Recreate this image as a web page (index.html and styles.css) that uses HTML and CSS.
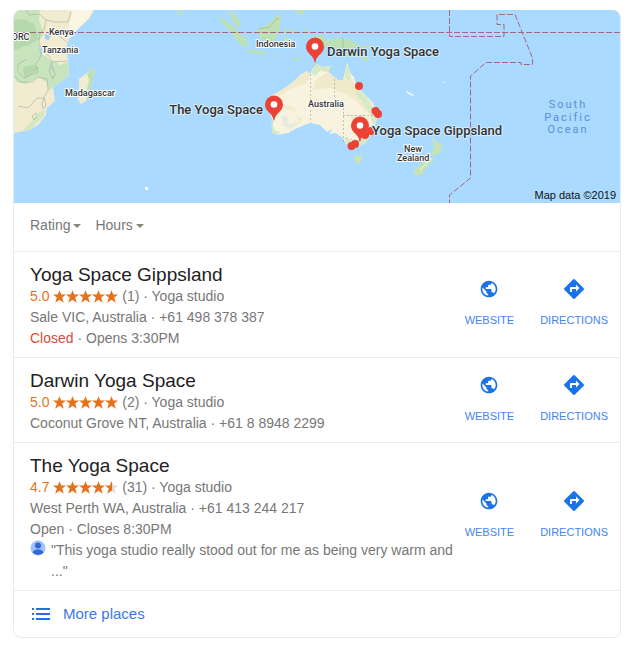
FILE: index.html
```html
<!DOCTYPE html>
<html lang="en">
<head>
  <meta charset="UTF-8">
  <meta name="viewport" content="width=device-width, initial-scale=1.0">
  <title>Yoga Space - Places</title>
  <link rel="stylesheet" href="styles.css">
</head>
<body>
  <!-- shared icons -->
  <svg class="sprite" aria-hidden="true">
    <symbol id="globe" viewBox="0 0 24 24">
      <path d="M12 2C6.48 2 2 6.48 2 12s4.48 10 10 10 10-4.48 10-10S17.52 2 12 2zm-1 17.93c-3.95-.49-7-3.85-7-7.93 0-.62.08-1.21.21-1.79L9 15v1c0 1.1.9 2 2 2v1.93zm6.9-2.54c-.26-.81-1-1.39-1.9-1.39h-1v-3c0-.55-.45-1-1-1H8v-2h2c.55 0 1-.45 1-1V7h2c1.1 0 2-.9 2-2v-.41c2.93 1.19 5 4.06 5 7.41 0 2.08-.8 3.97-2.1 5.39z"/>
    </symbol>
    <symbol id="directions" viewBox="0 0 24 24">
      <path d="M21.71 11.29l-9-9a1 1 0 0 0-1.41 0l-9 9a1 1 0 0 0 0 1.41l9 9c.39.39 1.02.39 1.41 0l9-9a1 1 0 0 0 0-1.41zM14 14.5V12h-4v3H8v-4c0-.55.45-1 1-1h5V7.5l3.5 3.5-3.5 3.5z"/>
    </symbol>
    <symbol id="star" viewBox="0 0 24 24">
      <path d="M12 .5l3.2 8H24l-7 5.5 2.8 9.5L12 18l-7.800 5.500L7 14 0 8.500h8.800z"/>
    </symbol>
    <symbol id="half-star" viewBox="0 0 24 24">
      <path fill="#dadce0" d="M12 .5l3.2 8H24l-7 5.5 2.8 9.5L12 18z"/>
      <path d="M13 3V18.700L12 18l-7.800 5.500L7 14 0 8.500h8.800L12 .5z"/>
    </symbol>
    <symbol id="pin" viewBox="0 0 20 26">
      <path fill="#ea4335" d="M10 .5a9 9 0 0 0-9 9c0 7 7.5 8.5 8.5 15.500q.5 1 1 0C11.500 18 19 16.500 19 9.500a9 9 0 0 0-9-9z"/>
      <circle cx="10" cy="9.500" r="3.300" fill="#fff"/>
    </symbol>
  </svg>

  <main class="card">
    <svg class="map" viewBox="14 10 606 193" preserveAspectRatio="xMidYMid slice" role="img" aria-label="Map of yoga studios">
      <rect class="sea" x="14" y="10" width="606" height="193"/>

      <!-- Africa -->
      <path fill="#f1ebcf" d="M14 10H94L89 19 78 29 69 39 66 48 68 60 69 76 60 82 53 87 55 101 47 108 46 115 38 125 30 130 14 133z"/>
      <path fill="#c8e4bd" d="M14 10H40L39 20 44 34 38 42 40 53 52 60 60 65 68 62 69 76 60 82 53 87 49 91 47 82 38 77 26 84 16 82 14 75z"/>
      <path fill="#b5d9ad" d="M14 20L24 19 34 24 39 39 29 45 14 50zM23 67L34 65 40 68 31 75 24 78zM48 32L53 33 51 37 47 37z"/>
      <path fill="#d5e8c3" d="M46 110L43 117 35 125 30 130 22 131 32 121 39 112z"/>
      <path fill="#fbf5e4" d="M73 10H93L88 19 78 29 70 38 69 25z"/>
      <path fill="#9fd0fa" d="M45 34l5 2-1 4-4-1zM38 43l2 10 2 3-1-7zM51 59l2 11-1 2z"/>
      <path class="land-border" d="M26 10l3 5 10-1 7 6 9 2 13 0 3-10M46 20l-2 10-4 3-1 10 3 7 9 8M50 33l7 1 11 9M53 62l14-1M42 51l-3 9-4 4 3 8-14 6-6-6v-8l9-5M52 61l-3 10 4 8 2-5-3-8M14 76l7 6 11 0 6-5 9 2 1 11-4 7 2 9-3 3-1-6 2-5-7 0-9 10-10-2M32 116l4-3 1 3-3 4z"/>

      <!-- Madagascar -->
      <path fill="#f2ecd2" d="M93 68l2 3-2 6-7 24-5 3-3-4 1-12 0-9 8-6z"/>
      <path fill="#bfe0b5" d="M93 67l2 5-3 10-5 16-1-5 3-13-2-6z"/>

      <!-- Indonesia -->
      <path fill="#bde0b4" d="M229 10l6 4 4 6 2 9-5-3-5-9zM218 17l8 3 11 11 10 9 1 8-8-4-10-12zM257 29l9-3 6-6 6-6 4 4-2 4 0 8-3 5-4 8-10-2-5-7zM246 49l9 1 12 3-2 2-15-2zM284 30l12 1-2 2-8-1-1 5 5 1-3 2 1 6-3-1-1-6zM306 27l2 1-1 8-2-3zM310 37l8-1 4-2 5 7 10-3 13 2 11 6 2 6 7 9-4 0-13-7-6 3-9-1-13-10zM272 54l8 1-3 2zM293 59l9-3-1 2-8 3zM293 10l12 0-3 5-6-3zM362 47l9-3-1 3-7 3zM177 10h4v4l-2 2z"/>
      <path class="land-border" d="M258 29l12-2 6-8 3 0M343 38v19"/>

      <!-- Australia -->
      <path fill="#f8f3df" d="M269 97L280 91 292 83 300 75 307 71 310 74 313 68 317 64 323 67 331 66 328 72 338 80 343 80 347 63 351 74 354 77 357 87 363 93 373 103 378 115 375 125 370 137 365 143 360 144 355 148 347 145 342 137 335 133 329 134 333 128 327 132 320 125 310 123 297 128 288 133 277 135 272 132 273 122 268 107z"/>
      <path fill="#f0e9ca" d="M269 97L280 91 292 83 300 75 307 71 310 76 306 84 292 88 281 95 271 101zM328 72L338 80 343 80 347 66 351 76 355 86 363 96 371 107 366 112 357 101 345 94 330 88 313 90 316 80z"/>
      <path fill="#f2ebcf" d="M281 104l12 2 5 6-9-2-10-2zM346 112l8 3 10-1 6 10-7 5-9-7zM313 98l9 3 5 6-8-2zM295 116l8 2-3 5z"/>
      <path fill="#d7e9c5" d="M311 73L313 68 317 64 323 67 331 66 328 72 320 71 315 76zM345 76l2-12 4 12-2 6zM271 121l4 9 5 3-3 2-5-3zM357 88l6 6 8 9 6 12-1 8-3 2-3-10-8-14-6-6zM344 137l8 4 11-2 8-5-2 5-5 5-9 4-8-3z"/>
      <path fill="#eae9e1" d="M281 115l6 1 2 8 7 1-5 4-8-3zM291 123l6-1 1 3-5 2z"/>
      <path class="state-border" d="M310.500 74v49M334.500 79v29.500M343.500 108v36M343 115.500h31M346 138l16 4"/>
      <path fill="#c8e3b8" d="M354 155l4 1 5-1-2 7-4 2-3-4z"/>

      <!-- New Zealand and small islands -->
      <path fill="#c6e2b9" d="M432 135l4 6 7 4-3 8-7 3-3-1 4-7zM433 157l1 3-7 7-4 7-6 2-4-3 5-7z"/>
      <path stroke="#f7f5e8" d="M432 158l-12 12"/>
      <path fill="#fff" d="M442 82l4 1-3 0zM406 91l8 4-1 1-6-3zM145 187h3v3h-3z"/>

      <!-- equator and date line -->
      <path class="dash" d="M14 32.500H620"/>
      <path class="dash" d="M449.500 10V36.500H504V24.500H497V14.500H515L532.500 58V64.500H521V62.500H486L470.500 76V178L449.500 195V203"/>

      <g class="country">
        <text x="49" y="35">Kenya</text>
        <text x="12" y="40">DRC</text>
        <text x="42" y="53">Tanzania</text>
        <text x="65" y="96">Madagascar</text>
        <text x="256" y="47">Indonesia</text>
        <text x="308" y="107">Australia</text>
        <text x="404" y="152">New</text>
        <text x="397" y="161">Zealand</text>
      </g>
      <g class="ocean">
        <text x="568" y="108">South</text>
        <text x="568" y="121">Pacific</text>
        <text x="568" y="133">Ocean</text>
      </g>

      <g fill="#ea4335">
        <circle cx="359" cy="86" r="4"/>
        <circle cx="375.500" cy="111" r="4"/>
        <circle cx="378" cy="114" r="4"/>
        <circle cx="371" cy="131" r="4"/>
        <circle cx="365" cy="135" r="4"/>
        <circle cx="351.500" cy="146" r="4"/>
        <circle cx="355" cy="144" r="4"/>
      </g>
      <use href="#pin" x="305" y="37" width="20" height="26"/>
      <use href="#pin" x="264" y="95" width="20" height="26"/>
      <use href="#pin" x="350" y="116" width="20" height="26"/>

      <g class="place-label">
        <text x="327" y="56">Darwin Yoga Space</text>
        <text class="left" x="263" y="114">The Yoga Space</text>
        <text x="372" y="135">Yoga Space Gippsland</text>
      </g>
      <text class="credit" x="616" y="199">Map data ©2019</text>
    </svg>

    <div class="filters">
      <button class="filter" type="button">Rating</button>
      <button class="filter" type="button">Hours</button>
    </div>

    <section class="place">
      <div class="info">
        <h2>Yoga Space Gippsland</h2>
        <p><span class="score">5.0</span>
          <span class="stars"><svg><use href="#star"/></svg><svg><use href="#star"/></svg><svg><use href="#star"/></svg><svg><use href="#star"/></svg><svg><use href="#star"/></svg></span>
          (1) · Yoga studio</p>
        <p>Sale VIC, Australia · +61 498 378 387</p>
        <p><span class="closed">Closed</span> · Opens 3:30PM</p>
      </div>
      <div class="actions">
        <a class="action" href="#"><svg class="globe"><use href="#globe"/></svg>WEBSITE</a>
        <a class="action" href="#"><svg><use href="#directions"/></svg>DIRECTIONS</a>
      </div>
    </section>

    <section class="place">
      <div class="info">
        <h2>Darwin Yoga Space</h2>
        <p><span class="score">5.0</span>
          <span class="stars"><svg><use href="#star"/></svg><svg><use href="#star"/></svg><svg><use href="#star"/></svg><svg><use href="#star"/></svg><svg><use href="#star"/></svg></span>
          (2) · Yoga studio</p>
        <p>Coconut Grove NT, Australia · +61 8 8948 2299</p>
      </div>
      <div class="actions">
        <a class="action" href="#"><svg class="globe"><use href="#globe"/></svg>WEBSITE</a>
        <a class="action" href="#"><svg><use href="#directions"/></svg>DIRECTIONS</a>
      </div>
    </section>

    <section class="place">
      <div class="info">
        <h2>The Yoga Space</h2>
        <p><span class="score">4.7</span>
          <span class="stars"><svg><use href="#star"/></svg><svg><use href="#star"/></svg><svg><use href="#star"/></svg><svg><use href="#star"/></svg><svg><use href="#half-star"/></svg></span>
          (31) · Yoga studio</p>
        <p>West Perth WA, Australia · +61 413 244 217</p>
        <p>Open · Closes 8:30PM</p>
        <div class="review">
          <svg class="avatar" viewBox="0 0 16 16">
            <circle cx="8" cy="8" r="7.500" fill="#a1c2fa"/>
            <circle cx="8" cy="5.500" r="3" fill="#3367d6"/>
            <path fill="#3367d6" d="M2.500 12.500C3.500 10 6 9.500 8 9.500s4.500.5 5.500 3a7.500 7.500 0 0 1-11 0z"/>
          </svg>
          <p>"This yoga studio really stood out for me as being very warm and ..."</p>
        </div>
      </div>
      <div class="actions">
        <a class="action" href="#"><svg class="globe"><use href="#globe"/></svg>WEBSITE</a>
        <a class="action" href="#"><svg><use href="#directions"/></svg>DIRECTIONS</a>
      </div>
    </section>

    <a class="more" href="#">
      <svg viewBox="0 0 18 12">
        <path d="M0 0h2v2H0zM0 5h2v2H0zM0 10h2v2H0zM4 0h14v2H4zM4 5h14v2H4zM4 10h14v2H4z"/>
      </svg>
      More places
    </a>
  </main>
</body>
</html>
```
FILE: styles.css
```css
body {
  margin: 0;
  padding: 10px 7px 12px 13px;
  background-color: #fff;
  color: #777;
  font-family: Arial, "Liberation Sans", sans-serif;
  font-size: 14px;
  line-height: 21px;
}
.sprite {
  position: absolute;
  width: 0;
  height: 0;
}
.card {
  border: 1px solid #e8eaed;
  border-top: none;
  border-radius: 8px;
  overflow: hidden;
}

/* map */
.map {
  display: block;
  width: 100%;
  height: 193px;
}
.sea {
  fill: #aadaff;
}
.land-border {
  fill: none;
  stroke: #a3b09b;
  stroke-width: 0.6;
}
.state-border {
  fill: none;
  stroke: #a9a99c;
  stroke-width: 0.7;
  stroke-dasharray: 2 2;
}
.dash {
  fill: none;
  stroke: #a7667f;
  stroke-width: 1;
  stroke-dasharray: 6 2;
}
.country,
.place-label {
  font-family: Roboto, sans-serif;
  font-weight: 500;
  fill: #333;
  stroke: #fff;
  stroke-width: 2px;
  stroke-linejoin: round;
  paint-order: stroke;
}
.country {
  font-size: 9px;
}
.place-label {
  font-size: 13px;
  stroke: #d5ecfc;
}
.place-label .left {
  text-anchor: end;
}
.ocean {
  font-family: Roboto, sans-serif;
  font-size: 11px;
  letter-spacing: 2px;
  text-anchor: middle;
  fill: #5b8fd6;
}
.credit {
  font-size: 11px;
  text-anchor: end;
  fill: #111;
}

/* filters */
.filters {
  display: flex;
  gap: 14px;
  padding: 12px 16px 15px;
}
.filter {
  display: flex;
  align-items: center;
  gap: 3px;
  padding: 0;
  border: none;
  background: none;
  color: #777;
  font: inherit;
  cursor: pointer;
}
.filter::after {
  content: "";
  border: 4px solid transparent;
  border-top-color: #878778;
  border-bottom: none;
}

/* places */
.place {
  display: flex;
  align-items: center;
  padding: 10px 12px 8px 16px;
  border-top: 1px solid #ebebeb;
}
.info {
  flex: 1;
}
h2 {
  margin: 0;
  padding-top: 2px;
  color: #222;
  font-size: 19px;
  font-weight: normal;
  line-height: 22px;
}
p {
  margin: 0;
}
.score {
  color: #e7711b;
}
.stars svg {
  width: 13px;
  height: 13px;
  vertical-align: -2px;
  fill: #e7711b;
}
.closed {
  color: #dd4b39;
}
.review {
  display: flex;
  gap: 5px;
}
.avatar {
  flex: none;
  width: 16px;
  height: 16px;
}
.actions {
  display: flex;
  gap: 26px;
  padding-bottom: 3px;
}
.action {
  display: flex;
  flex-direction: column;
  align-items: center;
  gap: 9px;
  color: #4285f4;
  font-size: 11px;
  text-decoration: none;
}
.action svg {
  width: 24px;
  height: 24px;
  fill: #1a73e8;
}
.action .globe {
  width: 20px;
  height: 20px;
  margin: 2px;
}

/* footer link */
.more {
  display: flex;
  align-items: center;
  gap: 13px;
  padding: 12px 18px 13px;
  border-top: 1px solid #ebebeb;
  color: #3b78e7;
  font-size: 15px;
  text-decoration: none;
}
.more svg {
  width: 18px;
  height: 12px;
  fill: #1a73e8;
}
```
